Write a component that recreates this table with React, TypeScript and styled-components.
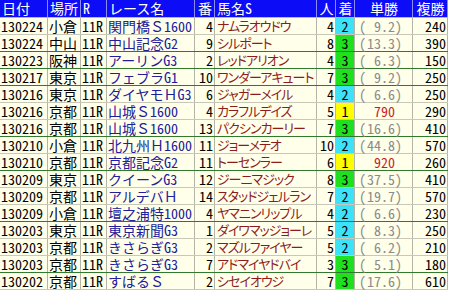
import styled, {createGlobalStyle} from "styled-components";

const GlobalStyle = createGlobalStyle`
  html, body {
    margin: 0;
    padding: 0;
    background: #ffffff;
  }
  * {
    box-sizing: border-box;
  }
`

type Row = {
    date: string
    place: string
    race: string
    no: string
    horse: string
    pop: string
    rank: number
    win: string
    show: string
    groupEnd?: boolean
}

const rows: Row[] = [
    {date: "130224", place: "小倉", race: "関門橋Ｓ1600", no: "4", horse: "ナムラオウドウ", pop: "4", rank: 2, win: "9.2", show: "240"},
    {date: "130224", place: "中山", race: "中山記念G2", no: "9", horse: "シルポート", pop: "8", rank: 3, win: "13.3", show: "390", groupEnd: true},
    {date: "130223", place: "阪神", race: "アーリンG3", no: "2", horse: "レッドアリオン", pop: "4", rank: 3, win: "6.3", show: "150", groupEnd: true},
    {date: "130217", place: "東京", race: "フェブラG1", no: "10", horse: "ワンダーアキュート", pop: "7", rank: 3, win: "9.2", show: "250", groupEnd: true},
    {date: "130216", place: "東京", race: "ダイヤモＨG3", no: "6", horse: "ジャガーメイル", pop: "4", rank: 2, win: "6.6", show: "250"},
    {date: "130216", place: "京都", race: "山城Ｓ1600", no: "4", horse: "カラフルデイズ", pop: "5", rank: 1, win: "790", show: "290"},
    {date: "130216", place: "京都", race: "山城Ｓ1600", no: "13", horse: "パクシンカーリー", pop: "7", rank: 3, win: "16.6", show: "410", groupEnd: true},
    {date: "130210", place: "小倉", race: "北九州Ｈ1600", no: "11", horse: "ジョーメテオ", pop: "10", rank: 2, win: "44.8", show: "570"},
    {date: "130210", place: "京都", race: "京都記念G2", no: "11", horse: "トーセンラー", pop: "6", rank: 1, win: "920", show: "260", groupEnd: true},
    {date: "130209", place: "東京", race: "クイーンG3", no: "12", horse: "ジーニマジック", pop: "8", rank: 3, win: "37.5", show: "410"},
    {date: "130209", place: "京都", race: "アルデバＨ", no: "14", horse: "スタッドジェルラン", pop: "7", rank: 2, win: "19.7", show: "570"},
    {date: "130209", place: "小倉", race: "壇之浦特1000", no: "4", horse: "ヤマニンリップル", pop: "4", rank: 2, win: "6.6", show: "230", groupEnd: true},
    {date: "130203", place: "東京", race: "東京新聞G3", no: "1", horse: "ダイワマッジョーレ", pop: "5", rank: 2, win: "8.3", show: "250"},
    {date: "130203", place: "京都", race: "きさらぎG3", no: "2", horse: "マズルファイヤー", pop: "5", rank: 2, win: "6.2", show: "210"},
    {date: "130203", place: "京都", race: "きさらぎG3", no: "7", horse: "アドマイヤドバイ", pop: "3", rank: 3, win: "5.1", show: "180", groupEnd: true},
    {date: "130202", place: "京都", race: "すばるＳ", no: "2", horse: "シセイオウジ", pop: "7", rank: 3, win: "17.6", show: "610"},
]

const rankColors: Record<number, string> = {
    1: "#ffff00",
    2: "#3ee2f8",
    3: "#1ee01e",
}

const cols = "48px 33px 26px 88px 20px 102px 19px 19px 58px 35px"

const Table = styled.div`
  width: 448px;
  font-family: "Noto Sans CJK JP", sans-serif;
  font-size: 14px;
  color: #000;
`

const HeadRow = styled.div`
  display: grid;
  grid-template-columns: ${cols};
  height: 18px;
  background: #0c0cf6;
  color: #ffffff;
  border-bottom: 1px solid #b8b8c8;
`

const HeadCell = styled.div<{ $align?: string }>`
  border-right: 1px solid #8c8cf0;
  line-height: 17px;
  padding: 0 1px 0 2px;
  text-align: ${p => p.$align || "left"};
  white-space: nowrap;
  font-feature-settings: "hwid";
`

const BodyRow = styled.div<{ $groupEnd?: boolean }>`
  display: grid;
  grid-template-columns: ${cols};
  height: 17px;
  background: #ffffea;
  border-bottom: 1px solid ${p => p.$groupEnd ? "#2f7a2f" : "#c8c8b8"};
`

const Cell = styled.div<{ $align?: string, $color?: string }>`
  border-right: 1px solid #b4b4a8;
  line-height: 16px;
  padding: 0 1px 0 1px;
  text-align: ${p => p.$align || "left"};
  color: ${p => p.$color || "#000"};
  white-space: nowrap;
  font-feature-settings: "hwid";
`

const RaceCell = styled(Cell)`
  font-feature-settings: normal;
  color: #20209c;
`

const Half = styled.span`
  font-feature-settings: "hwid";
`

const HorseCell = styled(Cell)`
  font-size: 13px;
  font-feature-settings: "palt";
  letter-spacing: -1px;
  padding-left: 2px;
  color: #8c1c1c;
`

const RankCell = styled.div<{ $rank: number }>`
  border-right: 1px solid #b4b4a8;
  line-height: 16px;
  text-align: center;
  font-feature-settings: "hwid";
  background: ${p => rankColors[p.$rank]};
`

const OddsCell = styled.div<{ $win?: boolean }>`
  display: flex;
  border-right: 1px solid #b4b4a8;
  line-height: 16px;
  padding: 0 10px 0 4px;
  font-feature-settings: "hwid";
  color: ${p => p.$win ? "#c81e1e" : "#8a8a8a"};
  white-space: nowrap;
`

const Paren = styled.span<{ $hidden?: boolean }>`
  width: 7px;
  text-align: center;
  visibility: ${p => p.$hidden ? "hidden" : "visible"};
`

const OddsNum = styled.span`
  flex: 1;
  text-align: right;
`

// ascii runs get half-width glyphs, full-width letters stay as they are
const RaceName = ({text}: { text: string }) => {
    const parts = text.match(/[\x20-\x7e]+|[^\x20-\x7e]+/g) || []
    return <>{parts.map((p, i) => /^[\x20-\x7e]+$/.test(p) ? <Half key={i}>{p}</Half> : p)}</>
}

const App = () => {
    return (<>
        <GlobalStyle/>
        <Table>
            <HeadRow>
                <HeadCell>日付</HeadCell>
                <HeadCell>場所</HeadCell>
                <HeadCell>R</HeadCell>
                <HeadCell>レース名</HeadCell>
                <HeadCell $align="center">番</HeadCell>
                <HeadCell>馬名S</HeadCell>
                <HeadCell $align="center">人</HeadCell>
                <HeadCell $align="center">着</HeadCell>
                <HeadCell $align="center">単勝</HeadCell>
                <HeadCell $align="center">複勝</HeadCell>
            </HeadRow>
            {rows.map((r, i) => (
                <BodyRow key={i} $groupEnd={r.groupEnd}>
                    <Cell>{r.date}</Cell>
                    <Cell>{r.place}</Cell>
                    <Cell>11R</Cell>
                    <RaceCell><RaceName text={r.race}/></RaceCell>
                    <Cell $align="right">{r.no}</Cell>
                    <HorseCell>{r.horse}</HorseCell>
                    <Cell $align="right">{r.pop}</Cell>
                    <RankCell $rank={r.rank}>{r.rank}</RankCell>
                    <OddsCell $win={r.rank === 1}>
                        <Paren $hidden={r.rank === 1}>(</Paren>
                        <OddsNum>{r.win}</OddsNum>
                        <Paren $hidden={r.rank === 1}>)</Paren>
                    </OddsCell>
                    <Cell $align="right">{r.show}</Cell>
                </BodyRow>
            ))}
        </Table>
    </>)
}

export default App
